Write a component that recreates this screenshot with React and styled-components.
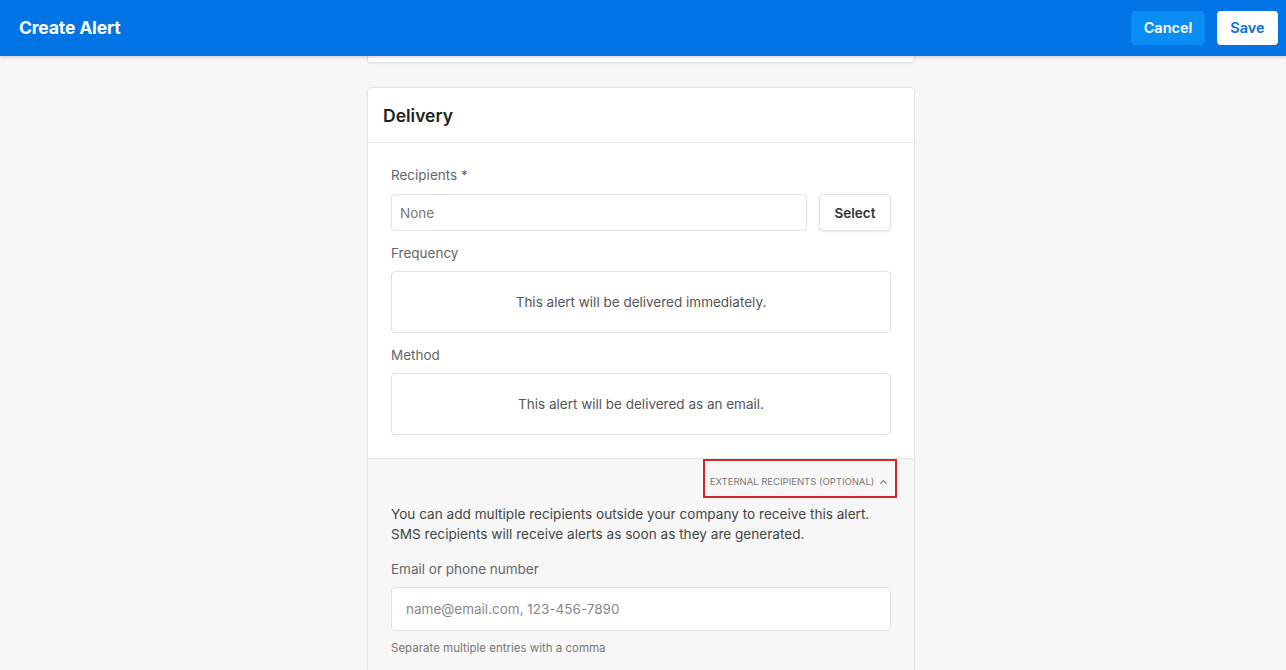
import styled, { createGlobalStyle } from "styled-components";

const GlobalStyle = createGlobalStyle`
  html, body {
    margin: 0;
    padding: 0;
    background: #f7f7f7;
    font-family: Inter, "Noto Sans", sans-serif;
    color: #333;
  }
  * { box-sizing: border-box; }
`;

const Page = styled.div`
  min-height: 100vh;
  display: flex;
  flex-direction: column;
`;

const Header = styled.header`
  height: 56px;
  background: #0074e4;
  display: flex;
  align-items: center;
  justify-content: space-between;
  padding: 0 8px 1px 19px;
  box-shadow: 0 1px 3px rgba(0, 0, 0, 0.2);
  position: relative;
  z-index: 1;
`;

const Title = styled.h1`
  margin: 0;
  font-size: 17.6px;
  font-weight: 700;
  color: #fff;
  letter-spacing: -0.2px;
`;

const Actions = styled.div`
  display: flex;
  gap: 12px;
`;

const HeaderButton = styled.button`
  height: 34px;
  width: ${(p) => (p.$primary ? "61px" : "74px")};
  padding: 0;
  border: none;
  border-radius: 4px;
  font-family: inherit;
  font-size: 14.5px;
  font-weight: 600;
  cursor: pointer;
  background: ${(p) => (p.$primary ? "#fff" : "#0a8cf5")};
  color: ${(p) => (p.$primary ? "#0a6fd8" : "#fff")};
`;

const Main = styled.main`
  width: 548px;
  margin-left: calc(50% - 276px);
  display: flex;
  flex-direction: column;
  gap: 24px;
`;

const PrevCard = styled.div`
  height: 7px;
  background: #fff;
  border: 1px solid #e3e3e3;
  border-top: none;
  border-radius: 0 0 4px 4px;
  box-shadow: 0 1px 2px rgba(0, 0, 0, 0.06);
`;

const Card = styled.section`
  background: #fff;
  border: 1px solid #e3e3e3;
  border-radius: 4px;
  box-shadow: 0 1px 2px rgba(0, 0, 0, 0.06);
  overflow: hidden;
`;

const CardHeader = styled.div`
  height: 55px;
  display: flex;
  align-items: center;
  padding: 0 15px;
  border-bottom: 1px solid #ebebeb;
`;

const CardTitle = styled.h2`
  margin: 0;
  font-size: 17.5px;
  font-weight: 600;
  color: #222;
`;

const CardBody = styled.div`
  padding: 22px 23px 23px;
  display: flex;
  flex-direction: column;
`;

const Label = styled.label`
  display: block;
  font-size: 13.5px;
  line-height: 20px;
  color: #666;
  margin: ${(p) => (p.$first ? "0 0 9px" : "12px 0 8px")};
`;

const Row = styled.div`
  display: flex;
  gap: 12px;
`;

const TextInput = styled.input`
  flex: ${(p) => (p.$tall ? "none" : "1")};
  height: ${(p) => (p.$tall ? "44px" : "37px")};
  border: 1px solid #e1e1e1;
  border-radius: 4px;
  padding: 0 ${(p) => (p.$tall ? "14px" : "8px")};
  font-family: inherit;
  font-size: 13.5px;
  color: #333;
  background: #fff;
  outline: none;
  &::placeholder {
    color: ${(p) => (p.$tall ? "#888" : "#777")};
  }
`;

const SelectButton = styled.button`
  width: 72px;
  height: 37px;
  border: 1px solid #e1e1e1;
  border-radius: 4px;
  background: #fff;
  font-family: inherit;
  font-size: 13.5px;
  font-weight: 600;
  color: #333;
  box-shadow: 0 1px 2px rgba(0, 0, 0, 0.08);
  cursor: pointer;
`;

const InfoBox = styled.div`
  height: 62px;
  border: 1px solid #e1e1e1;
  border-radius: 4px;
  display: flex;
  align-items: center;
  justify-content: center;
  font-size: 13.5px;
  color: #555;
`;

const External = styled.div`
  background: #f7f7f7;
  border-top: 1px solid #e6e6e6;
  padding: 0 23px 16px;
  display: flex;
  flex-direction: column;
`;

const ToggleRow = styled.div`
  display: flex;
  justify-content: flex-end;
  margin-right: -6px;
`;

const Toggle = styled.button`
  height: 39px;
  width: 194px;
  display: flex;
  align-items: flex-end;
  justify-content: center;
  gap: 5px;
  padding: 0 6px 8px 4px;
  border: 2px solid #d7242a;
  background: transparent;
  font-family: inherit;
  font-size: 9.5px;
  line-height: 12px;
  color: #777;
  text-transform: uppercase;
  cursor: pointer;
  white-space: nowrap;
`;

const Paragraph = styled.p`
  margin: 6px 0 3px;
  font-size: 13.6px;
  line-height: 20px;
  color: #444;
`;

const Hint = styled.div`
  margin-top: 9px;
  font-size: 11.5px;
  line-height: 16px;
  color: #777;
`;

const Chevron = () => (
  <svg width="9" height="12" viewBox="0 0 10 12" fill="none">
    <path d="M2 7.5 5 4.5 8 7.5" stroke="#6a7a8c" strokeWidth="1.4" strokeLinecap="round" strokeLinejoin="round" />
  </svg>
);

export default function App() {
  return (
    <Page>
      <GlobalStyle />
      <Header>
        <Title>Create Alert</Title>
        <Actions>
          <HeaderButton>Cancel</HeaderButton>
          <HeaderButton $primary>Save</HeaderButton>
        </Actions>
      </Header>
      <Main>
        <PrevCard />
        <Card>
          <CardHeader>
            <CardTitle>Delivery</CardTitle>
          </CardHeader>
          <CardBody>
            <Label $first>Recipients *</Label>
            <Row>
              <TextInput placeholder="None" />
              <SelectButton>Select</SelectButton>
            </Row>
            <Label>Frequency</Label>
            <InfoBox>This alert will be delivered immediately.</InfoBox>
            <Label>Method</Label>
            <InfoBox>This alert will be delivered as an email.</InfoBox>
          </CardBody>
          <External>
            <ToggleRow>
              <Toggle>
                External recipients (optional)
                <Chevron />
              </Toggle>
            </ToggleRow>
            <Paragraph>
              You can add multiple recipients outside your company to receive this alert.
              <br />
              SMS recipients will receive alerts as soon as they are generated.
            </Paragraph>
            <Label>Email or phone number</Label>
            <TextInput $tall placeholder="name@email.com, 123-456-7890" />
            <Hint>Separate multiple entries with a comma</Hint>
          </External>
        </Card>
      </Main>
    </Page>
  );
}
